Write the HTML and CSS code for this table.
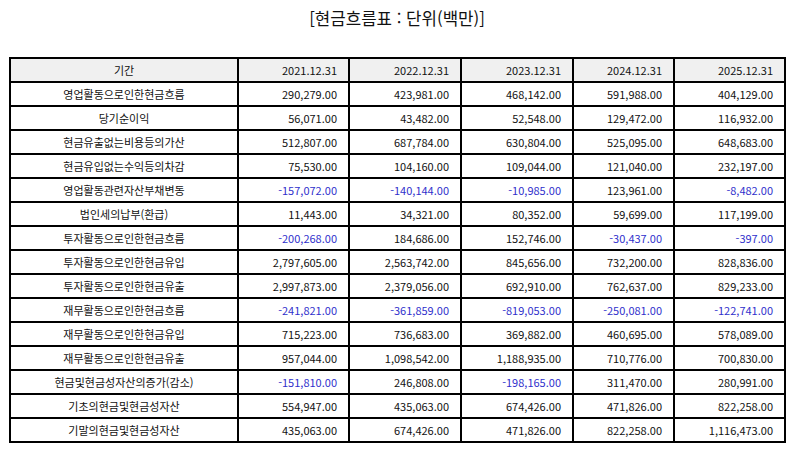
FILE: index.html
```html
<!DOCTYPE html>
<html lang="ko">
<head>
<meta charset="utf-8">
<title>현금흐름표</title>
<link rel="stylesheet" href="styles.css">
</head>
<body>
<div class="page">
  <h1 class="title">[현금흐름표 : 단위(백만)]</h1>
  <table class="cf">
    <colgroup>
      <col class="c-name"><col class="c-y"><col class="c-y2"><col class="c-y2"><col class="c-y3"><col class="c-y">
    </colgroup>
    <thead>
      <tr><th class="name">기간</th><th>2021.12.31</th><th>2022.12.31</th><th>2023.12.31</th><th>2024.12.31</th><th>2025.12.31</th></tr>
    </thead>
    <tbody>
      <tr><td class="name">영업활동으로인한현금흐름</td><td>290,279.00</td><td>423,981.00</td><td>468,142.00</td><td>591,988.00</td><td>404,129.00</td></tr>
      <tr><td class="name">당기순이익</td><td>56,071.00</td><td>43,482.00</td><td>52,548.00</td><td>129,472.00</td><td>116,932.00</td></tr>
      <tr><td class="name">현금유출없는비용등의가산</td><td>512,807.00</td><td>687,784.00</td><td>630,804.00</td><td>525,095.00</td><td>648,683.00</td></tr>
      <tr><td class="name">현금유입없는수익등의차감</td><td>75,530.00</td><td>104,160.00</td><td>109,044.00</td><td>121,040.00</td><td>232,197.00</td></tr>
      <tr><td class="name">영업활동관련자산부채변동</td><td class="neg">-157,072.00</td><td class="neg">-140,144.00</td><td class="neg">-10,985.00</td><td>123,961.00</td><td class="neg">-8,482.00</td></tr>
      <tr><td class="name">법인세의납부(환급)</td><td>11,443.00</td><td>34,321.00</td><td>80,352.00</td><td>59,699.00</td><td>117,199.00</td></tr>
      <tr><td class="name">투자활동으로인한현금흐름</td><td class="neg">-200,268.00</td><td>184,686.00</td><td>152,746.00</td><td class="neg">-30,437.00</td><td class="neg">-397.00</td></tr>
      <tr><td class="name">투자활동으로인한현금유입</td><td>2,797,605.00</td><td>2,563,742.00</td><td>845,656.00</td><td>732,200.00</td><td>828,836.00</td></tr>
      <tr><td class="name">투자활동으로인한현금유출</td><td>2,997,873.00</td><td>2,379,056.00</td><td>692,910.00</td><td>762,637.00</td><td>829,233.00</td></tr>
      <tr><td class="name">재무활동으로인한현금흐름</td><td class="neg">-241,821.00</td><td class="neg">-361,859.00</td><td class="neg">-819,053.00</td><td class="neg">-250,081.00</td><td class="neg">-122,741.00</td></tr>
      <tr><td class="name">재무활동으로인한현금유입</td><td>715,223.00</td><td>736,683.00</td><td>369,882.00</td><td>460,695.00</td><td>578,089.00</td></tr>
      <tr><td class="name">재무활동으로인한현금유출</td><td>957,044.00</td><td>1,098,542.00</td><td>1,188,935.00</td><td>710,776.00</td><td>700,830.00</td></tr>
      <tr><td class="name">현금및현금성자산의증가(감소)</td><td class="neg">-151,810.00</td><td>246,808.00</td><td class="neg">-198,165.00</td><td>311,470.00</td><td>280,991.00</td></tr>
      <tr><td class="name">기초의현금및현금성자산</td><td>554,947.00</td><td>435,063.00</td><td>674,426.00</td><td>471,826.00</td><td>822,258.00</td></tr>
      <tr><td class="name">기말의현금및현금성자산</td><td>435,063.00</td><td>674,426.00</td><td>471,826.00</td><td>822,258.00</td><td>1,116,473.00</td></tr>
    </tbody>
  </table>
</div>
</body>
</html>
```
FILE: styles.css
```css
html, body {
  margin: 0;
  padding: 0;
  background: #ffffff;
}
.page {
  padding: 0 9px 0 9px;
  font-family: "Noto Sans CJK KR", "Noto Sans", sans-serif;
  color: #111;
}
.title {
  margin: 0;
  padding-top: 6px;
  height: 24px;
  line-height: 24px;
  font-size: 16.8px;
  font-weight: 400;
  text-align: center;
  color: #111;
}
.cf {
  margin-top: 27px;
  border-collapse: collapse;
  table-layout: fixed;
  width: 777px;
  font-size: 11px;
}
.c-name { width: 228px; }
.c-y { width: 111px; }
.c-y2 { width: 112px; }
.c-y3 { width: 101px; }
.cf tr {
  height: 24px;
}
.cf th, .cf td {
  border: 2px solid #000;
  padding: 0 11px 0 4px;
  text-align: right;
  font-weight: 400;
  white-space: nowrap;
  line-height: 20px;
}
.cf th {
  background: #f0f0f0;
}
.cf .name {
  text-align: center;
  padding: 0 4px;
}
.cf .neg {
  color: #3030cc;
}
```
